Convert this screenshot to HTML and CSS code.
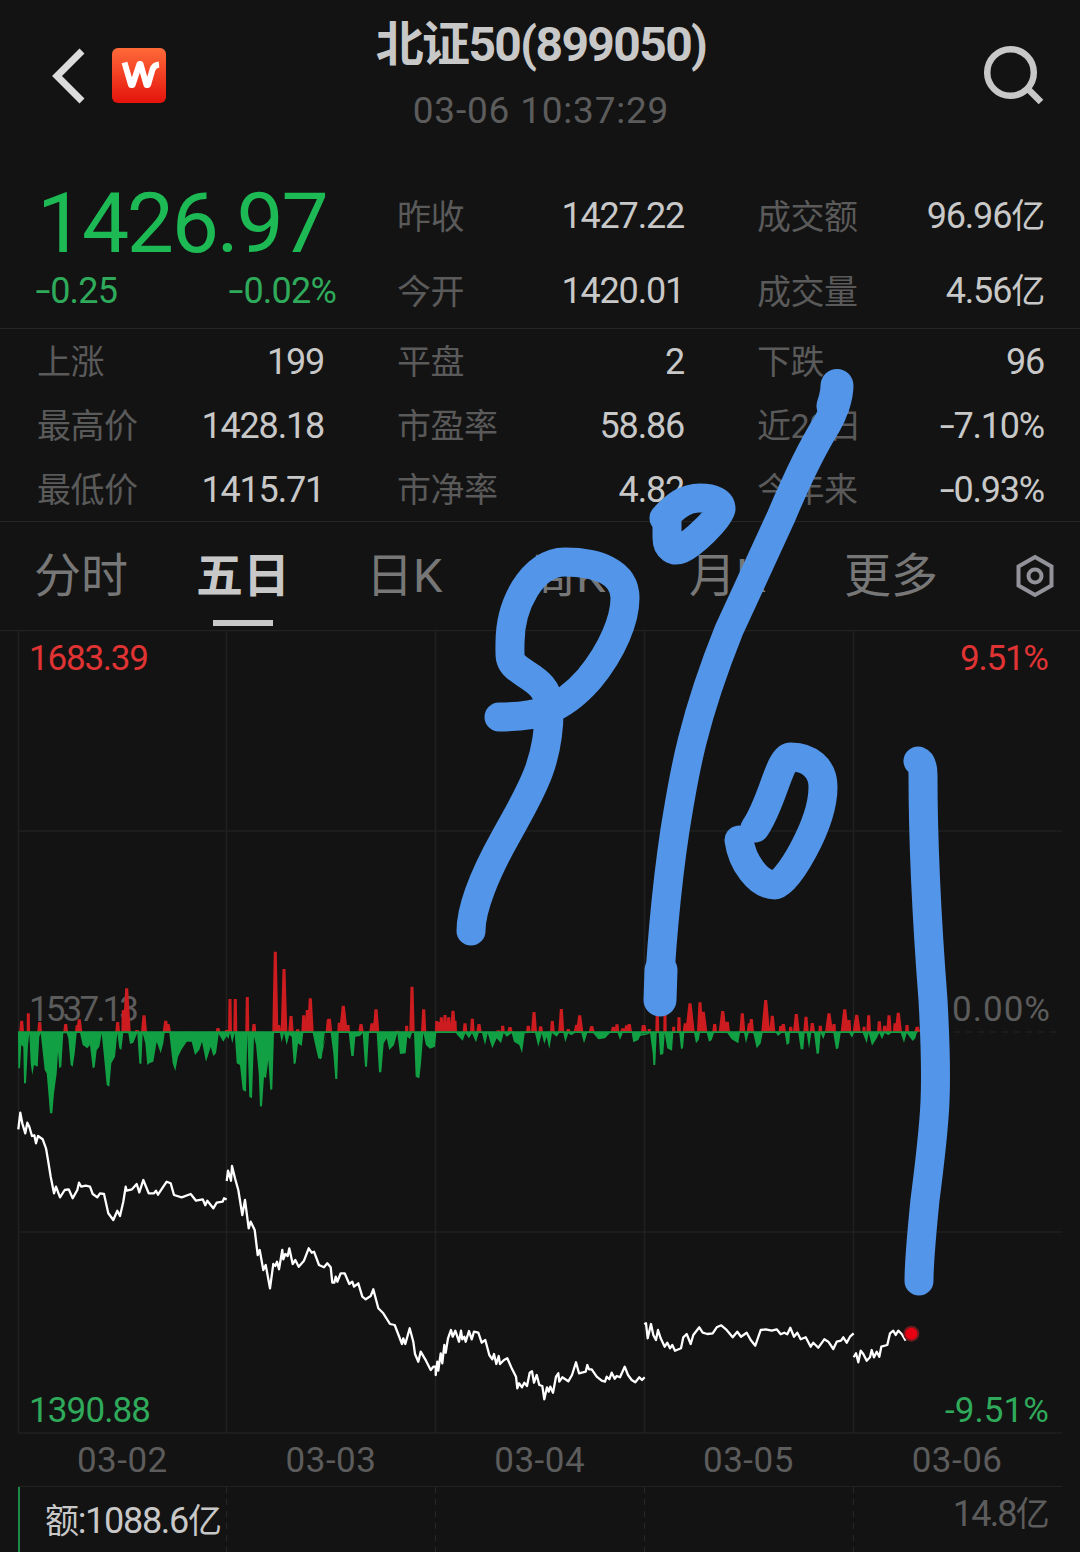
FILE: index.html
```
<!DOCTYPE html>
<html lang="zh">
<head>
  <meta charset="UTF-8" />
  <title>北证50(899050)</title>
  <link rel="stylesheet" href="styles.css">
</head>
<body>
  <header>
    <div class="nav">
      <svg class="back" width="34" height="56" viewBox="0 0 34 56"><path d="M31 3 6 28 31 53" /></svg>
      <svg class="logo" width="54" height="55" viewBox="0 0 54 55">
        <defs>
          <linearGradient id="logoBg" x1="0" y1="0" x2="0" y2="1">
            <stop offset="0" stop-color="#ff6a39" />
            <stop offset="1" stop-color="#e5130c" />
          </linearGradient>
        </defs>
        <rect width="54" height="55" rx="6" fill="url(#logoBg)" />
        <path d="M12.500 14.500 19 37H20.500L27.500 16H28.500L34.500 37H36L40.500 21.500Q42 17 47 16.500" />
      </svg>
    </div>
    <div class="heading">
      <h1>北证50(899050)</h1>
      <div class="time">03-06 10:37:29</div>
    </div>
    <svg class="search" width="64" height="64" viewBox="0 0 64 64"><circle cx="27.500" cy="28.500" r="23.300" /><path d="M44 44 58 58" /></svg>
  </header>

  <section class="quote">
    <div class="price">
      <div class="last">1426.97</div>
      <div class="change"><span><u>-</u>0.25</span><span><u>-</u>0.02%</span></div>
    </div>
    <dl>
      <div><dt>昨收</dt><dd>1427.22</dd></div>
      <div><dt>成交额</dt><dd>96.96<i>亿</i></dd></div>
      <div><dt>今开</dt><dd>1420.01</dd></div>
      <div><dt>成交量</dt><dd>4.56<i>亿</i></dd></div>
    </dl>
  </section>

  <dl class="stats">
    <div><dt>上涨</dt><dd>199</dd></div>
    <div><dt>平盘</dt><dd>2</dd></div>
    <div><dt>下跌</dt><dd>96</dd></div>
    <div><dt>最高价</dt><dd>1428.18</dd></div>
    <div><dt>市盈率</dt><dd>58.86</dd></div>
    <div><dt>近20日</dt><dd><u>-</u>7.10%</dd></div>
    <div><dt>最低价</dt><dd>1415.71</dd></div>
    <div><dt>市净率</dt><dd>4.82</dd></div>
    <div><dt>今年来</dt><dd><u>-</u>0.93%</dd></div>
  </dl>

  <nav class="tabs">
    <a>分时</a>
    <a class="active">五日</a>
    <a>日K</a>
    <a>周K</a>
    <a>月K</a>
    <a>更多</a>
    <svg class="setting" width="40" height="44" viewBox="0 0 40 44"><path d="M20 3 36.500 12.500V31.500L20 41 3.500 31.500V12.500Z" /><circle cx="20" cy="22" r="6.500" /></svg>
  </nav>

  <svg class="chart" width="1080" height="804" viewBox="0 630 1080 804">
    <g class="grid">
      <path d="M18.500 630V1433M226.500 630V1433M435.500 630V1433M644.500 630V1433M853.500 630V1433" />
      <path d="M0 630.500H1080M18 831H1062M18 1232H1062M18 1433H1062" />
      <path d="M18 1032H1062" stroke-dasharray="6 6" />
    </g>
    <g class="axis">
      <text class="up" x="29" y="670" textLength="120">1683.39</text>
      <text class="up" x="960" y="670" textLength="89">9.51%</text>
      <text x="29" y="1021" textLength="110">1537.13</text>
      <text x="952" y="1021" textLength="98">0.00%</text>
      <text class="down" x="29" y="1422" textLength="122">1390.88</text>
      <text class="down" x="945" y="1422" textLength="104">-9.51%</text>
    </g>
    <path id="barsUp" />
    <path id="barsDown" />
    <g id="price"></g>
    <circle class="halo" cx="911.300" cy="1333.700" r="8" />
    <circle class="dot" cx="911.300" cy="1333.700" r="6" />
  </svg>

  <div class="dates">
    <span>03-02</span><span>03-03</span><span>03-04</span><span>03-05</span><span>03-06</span>
  </div>

  <section class="volume">
    <span class="amount"><i>额</i>:1088.6<i>亿</i></span>
    <span class="max">14.8<i>亿</i></span>
    <div class="cols"><b></b><b></b><b></b><b></b></div>
  </section>

  <!-- 手写标注 -->
  <svg class="ink" width="1080" height="1552" viewBox="0 0 1080 1552">
    <path d="M499 717C535 717 560 712 589 679C613 650 625 619 625 598C625 572 597 562 565 562C532 562 510 605 510 643C510 655 509 659 514 665C524 676 549 681 549 707C550 764 529 794 505 838C486 872 471 908 471 931" />
    <path d="M837 386C838 400 834 412 827 424C810 451 797 479 781 517C759 564 743 600 729 630C690 727 683 782 675 830C666 890 660 960 659 1001" />
    <path class="thick" d="M837 385.500C837 394 835 400 833 406M661 970 660 1000" />
    <path d="M664 518C675 506 685 498 700 498C713 498 721 502 721 509C718 520 692 544 681 549C674 552 667 548 667 538V522" />
    <path d="M739 840C742 862 758 885 775 885C786 885 823 825 823 787C823 768 809 757 791 757C779 757 773 802 755 828" />
    <path d="M918 761Q923 763 923 775C923 860 928 935 933 1000C938 1090 936 1115 925 1200C921 1240 919 1262 919 1281" />
  </svg>

  <script src="script.js"></script>
</body>
</html>
```
FILE: styles.css
```
body {
  margin: 0;
  width: 1080px;
  height: 1552px;
  overflow: hidden;
  position: relative;
  background: #131313;
  color: #c8c8c8;
  font-family: Roboto, "Noto Sans CJK SC", sans-serif;
  font-size: 36px;
}

i {
  font-style: normal;
  font-size: 34px;
  line-height: 1;
}

/* 加宽的负号 */
u {
  display: inline-block;
  text-decoration: none;
  transform: scaleX(1.5);
  transform-origin: right;
  margin-left: 4px;
  margin-right: 1px;
}

header {
  display: flex;
  justify-content: space-between;
  height: 178px;
  box-sizing: border-box;
  padding: 0 33px 0 51px;
}

.nav, .search {
  flex: none;
}

.nav {
  display: flex;
  align-items: center;
  gap: 27px;
  height: 151px;
  width: 280px;
}

.back, .search, .setting {
  fill: none;
  stroke: #dcdcdc;
  stroke-width: 7;
}

.logo path {
  fill: none;
  stroke: #fff;
  stroke-width: 6;
  stroke-linejoin: round;
}

.heading {
  width: 420px;
  text-align: center;
  white-space: nowrap;
}

h1 {
  margin: 15px 0 0;
  font-size: 48px;
  line-height: 60px;
  font-weight: 700;
  letter-spacing: -1.6px;
}

.time {
  margin-top: 14px;
  font-size: 37px;
  line-height: 44px;
  letter-spacing: 0.8px;
  color: #5c5c5c;
}

.search {
  margin: 44px 0 0 232px;
  stroke: #c8c8c8;
  stroke-width: 6.5;
}

.quote {
  display: grid;
  grid-template-columns: 360px 720px;
  height: 150px;
  border-bottom: 1px solid #262626;
}

.price {
  padding: 0 24px 0 37px;
  color: #1db954;
}

.last {
  font-size: 84px;
  line-height: 92px;
  letter-spacing: -2.3px;
}

.change {
  display: flex;
  justify-content: space-between;
  line-height: 42px;
  letter-spacing: -0.8px;
  color: #2faa5b;
}

.change u {
  margin-left: 3px;
}

dl {
  display: grid;
  grid-template-columns: 360px 360px;
  grid-auto-rows: 75px;
  margin: 0;
}

dl div {
  display: flex;
  justify-content: space-between;
  align-items: center;
  padding: 0 36px 0 37px;
  white-space: nowrap;
}

dt {
  margin-top: -3px;
  color: #5a5a5a;
  font-size: 34px;
  letter-spacing: -0.5px;
}

dd {
  margin: 0;
  line-height: 44px;
  letter-spacing: -1.2px;
}

.stats {
  grid-template-columns: repeat(3, 360px);
  grid-auto-rows: 64px;
  border-bottom: 1px solid #262626;
}

.stats dd {
  margin-top: 1px;
}

.tabs {
  display: grid;
  grid-template-columns: 162px 170px 163px 160px 155px 171px 40px;
  align-items: center;
  height: 108px;
  box-sizing: border-box;
  padding-left: 34px;
  font-size: 47px;
  color: #777;
}

.tabs a {
  position: relative;
  line-height: 108px;
}

.tabs .active {
  color: #c8c8c8;
  font-weight: 700;
}

.tabs .active::after {
  content: "";
  position: absolute;
  left: 17px;
  bottom: 4px;
  width: 60px;
  height: 6px;
  background: #c8c8c8;
}

.setting {
  stroke: #92929a;
  stroke-width: 4;
}

.chart {
  display: block;
}

.grid {
  fill: none;
  stroke: #212121;
  stroke-width: 1.5;
}

.axis text {
  font-size: 35px;
  fill: #5c5c5c;
}

.axis .up {
  fill: #e03333;
}

.axis .down {
  fill: #2faa5b;
}

#barsUp {
  fill: #cc1c1f;
}

#barsDown {
  fill: #12a044;
}

#price path {
  fill: none;
  stroke: #fff;
  stroke-width: 2.3;
  stroke-linejoin: round;
}

.halo {
  fill: #6a1c20;
}

.dot {
  fill: #e60012;
}

.dates {
  display: grid;
  grid-template-columns: repeat(5, 208.7px);
  height: 52px;
  margin-left: 18px;
  width: 1044px;
  border-bottom: 1px solid #222;
  color: #5c5c5c;
  font-size: 35px;
  line-height: 54px;
  letter-spacing: 0.5px;
  text-align: center;
}

.volume {
  display: flex;
  justify-content: space-between;
  position: relative;
  height: 66px;
  margin-left: 18px;
  width: 1003px;
  padding: 0 14px 0 25px;
  border-left: 2px solid #1b8a48;
  line-height: 68px;
}

.amount {
  letter-spacing: -1.3px;
}

.max {
  line-height: 54px;
  letter-spacing: -1.8px;
  color: #5c5c5c;
}

/* 成交额区的日期分隔线 */
.cols {
  position: absolute;
  inset: 0 auto 0 -1px;
  display: flex;
}

.cols b {
  width: 208px;
  background: repeating-linear-gradient(#262626 0 6px, transparent 6px 12px) right / 1px 100% no-repeat;
  margin-right: 1px;
}

.ink {
  position: absolute;
  left: 0;
  top: 0;
  fill: none;
  stroke: #5395e9;
  stroke-width: 29;
  stroke-linecap: round;
  stroke-linejoin: round;
}

.ink .thick {
  stroke-width: 33;
}
```
FILE: script.js
```
// 坐标单位为 1/3 像素，每组第一个数是横向偏移
const BASE = 305;
const TOP = 2790;

// 上方红柱：x, 顶部 y, 半底宽（默认 7）
const up = [
  [0, [[65,272],[85,250,5],[119,276],[197,282],[232,285],[238,268,9],[353,276],[370,240,6],[380,175,12],[411,300],[432,256,9],[497,272,9],[504,282,9],[654,294],[680,300],[690,207,6],[706,207,6],[742,201,6],[762,282],[826,65,9],[836,285],[852,117,10],[873,258,8],[893,298],[911,256,7],[922,240,7],[931,205,10],[985,268,8]]],
  [960, [[28,266,9],[58,278,6],[70,227,13],[84,285,6],[123,282,8],[156,280,8],[168,238,10],[232,302],[260,287,5],[276,170,8],[311,238,8],[350,273,5],[357,276],[364,262],[375,255],[386,262],[399,242,9],[405,272,6],[435,280],[457,266],[477,282,8],[535,301],[548,287,6],[570,291,8],[625,287],[642,246,9],[662,289],[697,273],[724,237,9],[745,297],[770,284,9],[779,256,11],[815,288,9],[880,290,8],[891,283,7],[908,295],[920,286,9],[928,282,8],[972,285,8]]],
  [1920, [[10,285],[28,297,5],[52,240,6],[75,250,5],[101,290,5],[117,262,6],[136,280,8],[150,220,14],[180,217,9],[190,245,12],[224,282],[248,243,12],[262,275,8],[307,250,9],[328,280,8],[334,267,8],[377,210,13],[397,257,9],[422,288,6],[430,282,8],[452,290,6],[469,252,10],[498,260,8],[517,279,8],[541,287,6],[567,250,12],[582,282,6],[614,238,12],[627,270,7],[650,254,12],[672,290,5],[686,256,7],[718,274,7],[734,287,7],[747,256,8],[775,248,11],[765,280,6],[801,285,6],[832,290,9]]]
];

// 下方绿柱轮廓
const down = [
  [0, "55,415 60,415 64,345 70,350 72,460 78,460 84,345 88,310 92,400 97,435 102,405 113,410 118,320 122,310 128,365 134,420 140,430 146,500 150,550 157,550 162,490 170,430 174,365 178,415 184,410 190,310 200,310 205,325 212,405 218,410 224,370 230,308 240,308 248,345 262,355 270,345 278,415 284,412 290,360 298,350 305,310 312,380 320,465 328,470 334,400 345,380 352,308 358,355 364,360 370,306 385,310 390,342 400,338 412,306 418,400 424,403 428,310 436,340 442,405 448,400 460,395 470,335 482,370 490,340 494,306 508,306 518,400 526,423 534,380 545,358 560,335 575,335 585,375 598,360 606,335 618,395 626,370 632,350 640,378 648,370 656,312 670,335 680,318 685,328 690,306 697,340 704,308 710,400 720,405 728,480 738,485 742,310 748,500 756,505 762,320 768,345 776,430 780,530 786,528 792,440 798,445 805,390 811,480 817,478 822,306 840,306 845,337 852,308 860,345 868,315 875,320 881,403 887,400 894,340 905,348 910,308 938,308 945,342 955,385 963,388 972,345 980,306"],
  [960, "0,385 5,385 14,306 32,306 40,370 46,447 52,447 56,306 86,306 94,378 101,378 106,320 120,318 128,308 135,410 141,410 147,306 170,306 177,427 184,427 191,340 200,325 208,360 222,345 232,308 240,372 257,370 262,320 270,328 276,306 282,306 287,440 298,445 303,400 310,306 318,345 330,356 345,350 349,306 408,306 412,315 428,332 436,310 447,325 456,310 468,337 476,306 486,306 495,345 503,310 517,355 530,325 543,340 551,306 560,320 575,310 582,335 598,345 606,370 614,310 630,306 645,308 655,350 665,310 673,342 680,320 688,357 696,306 710,320 718,306 730,306 736,337 745,310 754,316 765,306 784,306 792,340 802,306 820,310 835,328 855,325 870,308 893,306 900,330 908,306 935,308 940,337 955,330 965,308 985,312"],
  [1920, "0,318 8,308 20,315 30,308 38,370 40,405 46,405 50,308 56,306 60,375 70,372 74,306 82,355 96,362 100,308 118,308 123,357 129,355 133,306 162,306 168,340 176,330 180,306 200,306 207,335 215,330 222,306 262,306 275,328 295,340 300,308 312,308 318,340 326,308 340,310 350,355 362,340 368,306 408,306 414,318 424,306 434,308 440,345 448,340 450,306 475,306 482,358 490,358 494,308 500,310 507,356 514,308 522,306 530,372 537,370 542,308 550,328 556,308 580,306 588,358 595,355 602,306 628,306 636,323 642,306 668,308 680,340 686,308 696,347 710,325 718,306 726,328 734,308 745,316 754,306 782,306 792,338 800,308 818,333 826,325 830,306"]
];

// 五日价格线
const price = [
  [0, 2790, "55,598 61,548 67,580 76,610 82,578 88,590 96,618 103,616 108,640 114,618 128,628 138,655 144,690 152,740 162,790 168,770 180,802 194,780 206,778 218,805 232,780 237,758 244,770 257,767 270,770 278,792 292,802 300,790 312,792 325,850 340,870 352,842 360,858 370,815 377,770 380,782 396,778 410,762 418,787 430,750 446,790 462,790 468,782 474,794 490,770 500,755 512,760 522,795 545,802 572,792 588,812 608,808 616,826 622,812 640,835 650,818 668,815 672,805 680,808"],
  [660, 3450, "20,93 24,62 33,92 36,48 45,85 55,120 67,195 75,150 86,235 92,215 104,240 113,315 119,300 130,360 137,345 150,415 160,342 166,348 171,335 177,358 187,300 190,328 196,312 203,318 208,295 218,342 226,330 236,350 252,332 266,295 275,308 282,305 297,345 312,352 322,340 332,352 337,398 343,398 347,380 352,395 362,370 374,370 388,402 397,395 402,410 415,400 427,440 437,448 452,438 460,418 475,475 490,490 510,522 524,525 546,582 550,565 556,582 569,535 580,575 585,612 595,635 602,605 618,632 632,660 640,650 647,650 647,675 652,635 655,662 662,610 667,640 673,585 677,608 684,565 693,540 698,560 706,542 717,575 723,542 727,568 733,560 737,575 747,543 755,568 762,545 775,548 785,578 796,570 808,615 817,628 822,612 829,642 836,618 840,642 852,630 862,625 875,655 888,680 892,715 897,700 906,712 913,698 921,708 929,668 936,664 942,698 950,675 958,705 967,708 973,748 981,712 986,725 991,710 999,728 1008,680 1015,670 1018,695 1027,682 1045,694 1056,675 1068,637 1077,670 1097,665 1102,645 1107,658 1115,658 1130,680 1145,692 1155,695 1160,680 1168,688 1175,668 1184,686 1190,678 1200,682 1214,650 1224,675 1235,690 1246,697 1258,682 1266,690 1274,682"],
  [1920, 3840, "13,133 18,130 23,175 33,132 40,165 48,180 54,150 62,175 74,200 82,188 90,205 97,195 105,212 123,205 130,172 140,162 152,192 160,165 178,142 188,158 202,162 218,160 230,142 244,136 258,148 278,172 292,155 303,170 320,158 332,180 346,197 362,150 377,148 395,152 410,148 422,163 433,158 442,163 451,143 462,170 472,158 482,178 497,172 512,200 520,188 535,203 553,178 565,185 580,207 590,185 603,182 610,172 620,188 630,170 641,160"],
  [1920, 3840, "641,232 648,220 655,247 662,212 670,222 680,242 690,232 695,210 702,232 710,215 718,230 724,200 742,195 750,160 760,152 767,165 775,152 785,162 797,182"]
];

const px = (v, offset) => ((v + offset) / 3).toFixed(1);
const pairs = text => text.split(" ").map(p => p.split(",").map(Number));

let d = "";
for (const [ox, bars] of up) {
  for (const [x, y, w = 7] of bars) {
    d += `M${px(x - w, ox)} ${px(BASE, TOP)}L${px(x - 4.5, ox)} ${px(y, TOP)}H${px(x + 4.5, ox)}L${px(x + w, ox)} ${px(BASE, TOP)}Z`;
  }
}
document.getElementById("barsUp").setAttribute("d", d);

d = "M18 1031.3";
for (const [ox, text] of down) {
  for (const [x, y] of pairs(text)) d += `L${px(x, ox)} ${px(Math.max(y, 309), TOP)}`;
}
document.getElementById("barsDown").setAttribute("d", d + "L919 1031.3Z");

document.getElementById("price").innerHTML = price
  .map(([ox, oy, text]) => `<path d="M${pairs(text).map(([x, y]) => px(x, ox) + " " + px(y, oy)).join("L")}" />`)
  .join("");
```
